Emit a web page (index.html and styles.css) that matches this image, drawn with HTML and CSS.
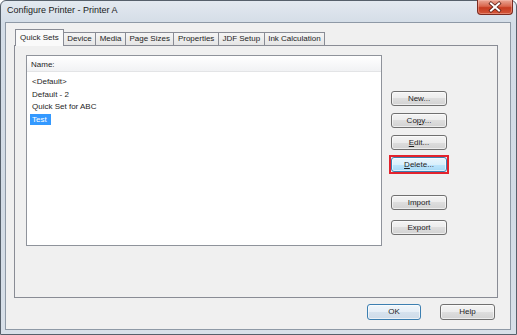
FILE: index.html
```html
<!DOCTYPE html>
<html lang="en">
  <head>
    <meta charset="UTF-8" />
    <title>Configure Printer - Printer A</title>
    <link rel="stylesheet" href="styles.css">
  </head>
  <body>
    <div class="window">
      <div class="titlebar">
        <span class="title">Configure Printer - Printer A</span>
        <div class="close-btn">
          <svg width="34" height="14" viewBox="0 0 34 14">
            <path d="M13 3.5 L21 10.5 M21 3.5 L13 10.5" stroke="#5b1f16" stroke-width="3.6" stroke-linecap="square" />
            <path d="M13 3.5 L21 10.5 M21 3.5 L13 10.5" stroke="#ffffff" stroke-width="2" stroke-linecap="square" />
          </svg>
        </div>
      </div>

      <div class="client">
        <div class="tabs">
          <div class="tab active">Quick Sets</div>
          <div class="tab">Device</div>
          <div class="tab">Media</div>
          <div class="tab">Page Sizes</div>
          <div class="tab">Properties</div>
          <div class="tab">JDF Setup</div>
          <div class="tab">Ink Calculation</div>
        </div>

        <div class="tab-panel">
          <div class="list-box">
            <div class="list-header">Name:</div>
            <ul class="list-items">
              <li><span>&lt;Default&gt;</span></li>
              <li><span>Default - 2</span></li>
              <li><span>Quick Set for ABC</span></li>
              <li class="selected"><span>Test</span></li>
            </ul>
          </div>

          <div class="side-buttons">
            <button class="btn">New...</button>
            <button class="btn">Co<u>p</u>y...</button>
            <button class="btn"><u>E</u>dit...</button>
            <div class="marked">
              <button class="btn hover"><u>D</u>elete...</button>
            </div>
            <button class="btn import-btn">Import</button>
            <button class="btn export-btn">Export</button>
          </div>
        </div>

        <div class="dialog-buttons">
          <button class="btn dlg default">OK</button>
          <button class="btn dlg">Help</button>
        </div>
      </div>
    </div>
  </body>
</html>
```

FILE: styles.css
```css
body {
  margin: 0;
  font-family: "Liberation Sans", Arial, sans-serif;
  font-size: 8px;
  color: #1e1e1e;
  background-color: #fff;
}

.window {
  width: 517px;
  height: 335px;
  box-sizing: border-box;
  border: 1px solid #56606b;
  border-radius: 6px 6px 0 0;
  padding: 0 5px 4px 4px;
  background: linear-gradient(to bottom, #e3e9f0 0, #d4dde7 22px, #d2dbe5 60%, #d8e0e9 100%);
  display: flex;
  flex-direction: column;
}

.titlebar {
  height: 21px;
  display: flex;
  justify-content: space-between;
  align-items: flex-start;
}

.title {
  font-size: 9px;
  padding: 4px 0 0 2px;
  color: #1a1a1a;
}

.close-btn {
  width: 34px;
  height: 14px;
  margin-top: -1px;
  margin-right: -2px;
  border: 1px solid #7b2b20;
  border-top: none;
  border-radius: 0 0 4px 4px;
  background: linear-gradient(to bottom, #eaa897 0, #d9664d 45%, #c63b20 55%, #d4573a 100%);
  box-shadow: inset 0 0 0 1px rgba(255, 200, 190, 0.4);
}

.close-btn svg {
  display: block;
}

.client {
  flex: 1;
  border: 1px solid #8e99a6;
  background-color: #f0f0f0;
  padding: 6px 12px 9px 8px;
  display: flex;
  flex-direction: column;
}

.tabs {
  display: flex;
  align-items: flex-end;
  height: 16px;
  padding-left: 1px;
  position: relative;
  z-index: 1;
}

.tab {
  height: 13px;
  box-sizing: border-box;
  border: 1px solid #898c95;
  border-bottom: none;
  margin-left: -1px;
  padding: 0 3.5px;
  line-height: 12px;
  background: linear-gradient(to bottom, #f5f5f5, #e5e5e5);
}

.tab:first-child {
  margin-left: 0;
}

.tab.active {
  height: 17px;
  margin-bottom: -1px;
  padding: 0 4px;
  line-height: 15px;
  background: #fafafa;
}

.tab-panel {
  height: 253px;
  box-sizing: border-box;
  border: 1px solid #898c95;
  background-color: #f0f0f0;
  display: flex;
  align-items: flex-start;
  gap: 9px;
  padding: 9px 0 0 11px;
}

.list-box {
  width: 356px;
  height: 191px;
  box-sizing: border-box;
  border: 1px solid #8f939b;
  background-color: #fff;
}

.list-header {
  height: 16px;
  box-sizing: border-box;
  padding: 2px 0 0 4px;
  line-height: 13px;
  border-bottom: 1px solid #e3e4e6;
  background: linear-gradient(to bottom, #ffffff, #f1f2f4);
}

.list-items {
  list-style: none;
  margin: 0;
  padding: 3px 0 0 0;
}

.list-items li {
  height: 12.5px;
  padding-left: 3px;
}

.list-items span {
  display: inline-block;
  height: 11px;
  line-height: 11px;
  margin-top: 1px;
  padding: 0 4px 0 2px;
}

.list-items li.selected span {
  background-color: #3399ff;
  color: #fff;
}

.side-buttons {
  display: flex;
  flex-direction: column;
  align-items: flex-start;
  gap: 7px;
  padding-top: 36px;
}

.btn {
  width: 56px;
  height: 15px;
  box-sizing: border-box;
  padding: 0;
  border: 1px solid #707070;
  border-radius: 3px;
  background: linear-gradient(to bottom, #f4f4f4 0, #ececec 50%, #dedede 50%, #d2d2d2 100%);
  box-shadow: inset 0 0 0 1px rgba(255, 255, 255, 0.6);
  font-family: inherit;
  font-size: 8px;
  color: #1e1e1e;
  line-height: 13px;
}

.btn.hover {
  display: block;
  border-color: #3c7fb1;
  background: linear-gradient(to bottom, #eaf6fd 0, #d9f0fc 50%, #bee6fd 50%, #a7d9f5 100%);
}

.marked {
  margin: -2px;
  border: 2px solid #e3232d;
}

.import-btn {
  margin-top: 16px;
}

.export-btn {
  margin-top: 3px;
}

.dialog-buttons {
  display: flex;
  justify-content: flex-end;
  gap: 19px;
  margin-top: 6px;
  padding-right: 3px;
}

.btn.dlg {
  width: 55px;
  height: 16px;
  line-height: 14px;
}

.btn.default {
  width: 54px;
  border-color: #3c7fb1;
  background: linear-gradient(to bottom, #f0f6fb 0, #e6eef6 50%, #d6e2ee 50%, #cfdbe8 100%);
}
```
